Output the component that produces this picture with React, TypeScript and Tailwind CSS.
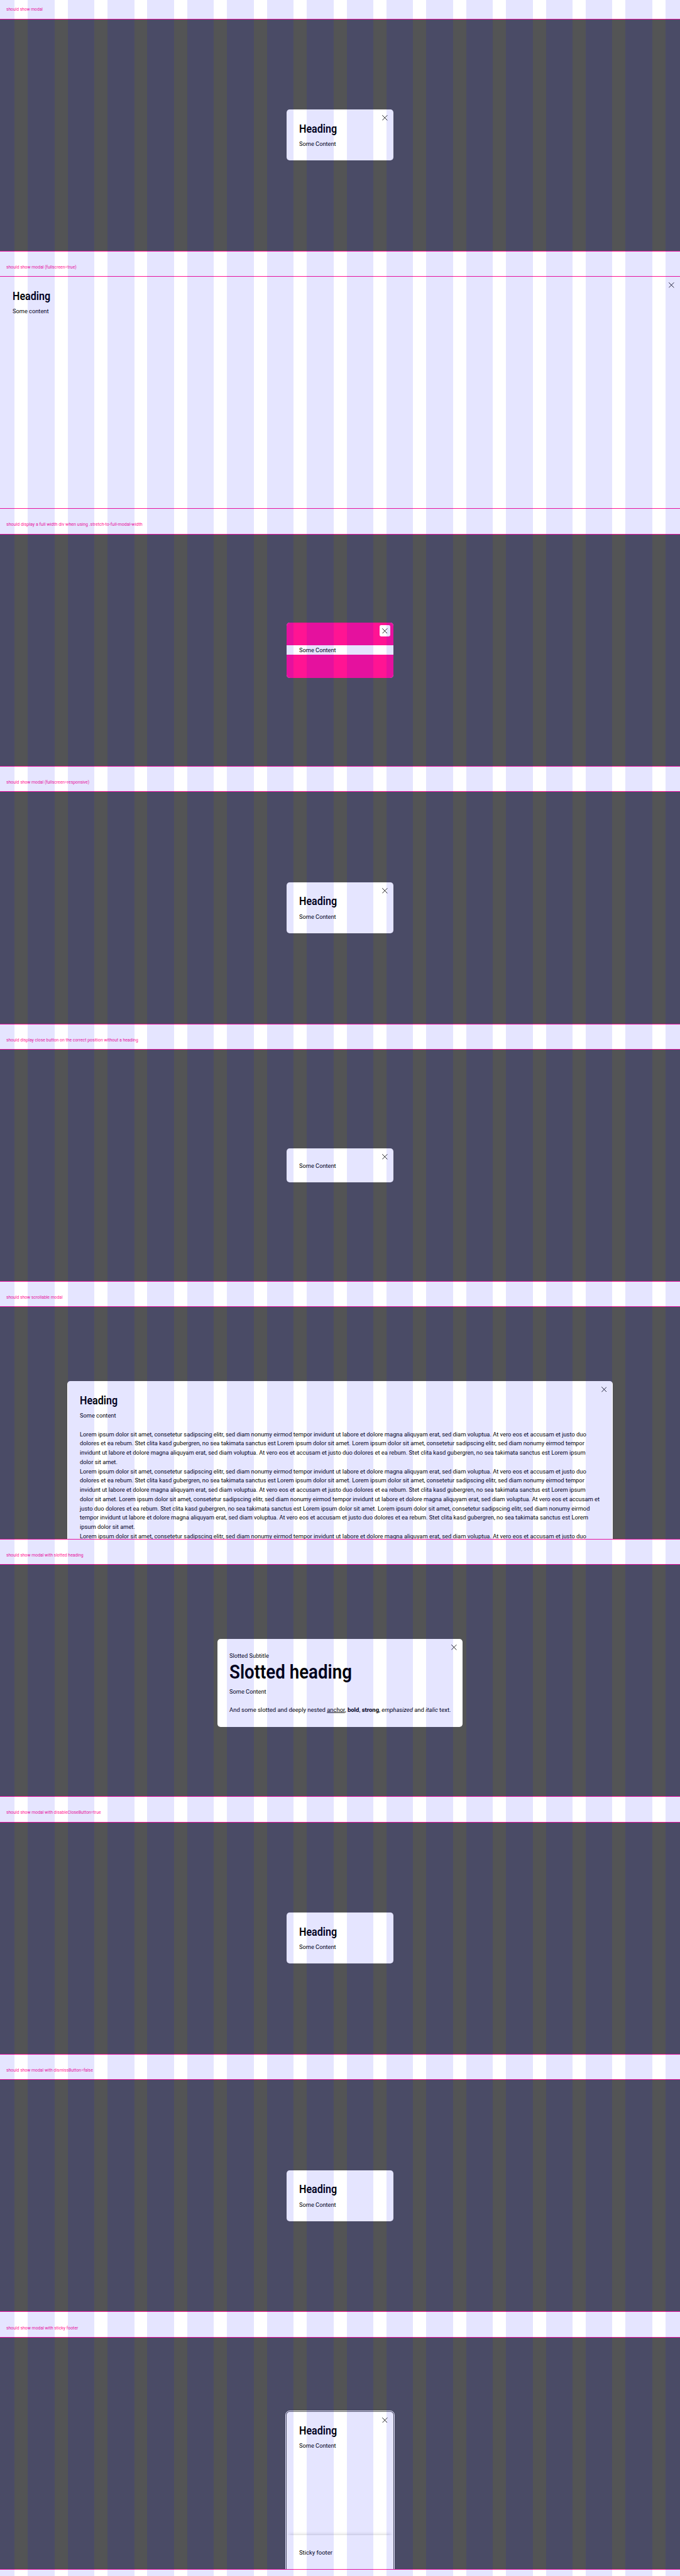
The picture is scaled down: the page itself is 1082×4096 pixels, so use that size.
import React from "react";
import type { ReactNode } from "react";

const LINES = [
  "Lorem ipsum dolor sit amet, consetetur sadipscing elitr, sed diam nonumy eirmod tempor invidunt ut labore et dolore magna aliquyam erat, sed diam voluptua. At vero eos et accusam et justo duo",
  "dolores et ea rebum. Stet clita kasd gubergren, no sea takimata sanctus est Lorem ipsum dolor sit amet. Lorem ipsum dolor sit amet, consetetur sadipscing elitr, sed diam nonumy eirmod tempor",
  "invidunt ut labore et dolore magna aliquyam erat, sed diam voluptua. At vero eos et accusam et justo duo dolores et ea rebum. Stet clita kasd gubergren, no sea takimata sanctus est Lorem ipsum",
  "dolor sit amet.",
  "Lorem ipsum dolor sit amet, consetetur sadipscing elitr, sed diam nonumy eirmod tempor invidunt ut labore et dolore magna aliquyam erat, sed diam voluptua. At vero eos et accusam et justo duo",
  "dolores et ea rebum. Stet clita kasd gubergren, no sea takimata sanctus est Lorem ipsum dolor sit amet. Lorem ipsum dolor sit amet, consetetur sadipscing elitr, sed diam nonumy eirmod tempor",
  "invidunt ut labore et dolore magna aliquyam erat, sed diam voluptua. At vero eos et accusam et justo duo dolores et ea rebum. Stet clita kasd gubergren, no sea takimata sanctus est Lorem ipsum",
  "dolor sit amet. Lorem ipsum dolor sit amet, consetetur sadipscing elitr, sed diam nonumy eirmod tempor invidunt ut labore et dolore magna aliquyam erat, sed diam voluptua. At vero eos et accusam et",
  "justo duo dolores et ea rebum. Stet clita kasd gubergren, no sea takimata sanctus est Lorem ipsum dolor sit amet. Lorem ipsum dolor sit amet, consetetur sadipscing elitr, sed diam nonumy eirmod",
  "tempor invidunt ut labore et dolore magna aliquyam erat, sed diam voluptua. At vero eos et accusam et justo duo dolores et ea rebum. Stet clita kasd gubergren, no sea takimata sanctus est Lorem",
  "ipsum dolor sit amet.",
  "Lorem ipsum dolor sit amet, consetetur sadipscing elitr, sed diam nonumy eirmod tempor invidunt ut labore et dolore magna aliquyam erat, sed diam voluptua. At vero eos et accusam et justo duo",
];

function CloseButton() {
  return (
    <button
      aria-label="Close"
      className="absolute top-[4.92px] right-[4.92px] flex size-[17.22px] items-center justify-center rounded-[2.46px] bg-white"
    >
      <svg viewBox="0 0 14 14" className="size-[8.61px]" fill="none" stroke="#010205" strokeWidth="1.4">
        <path d="M0.4 0.4 13.6 13.6M13.6 0.4 0.4 13.6" />
      </svg>
    </button>
  );
}

function Text({ children, scale = "scale-x-[0.9425]" }: { children: ReactNode; scale?: string }) {
  return (
    <p
      className={`h-[14.76px] w-max origin-left translate-y-[0.6px] text-[9.84px] leading-[14.76px] whitespace-nowrap ${scale}`}
    >
      {children}
    </p>
  );
}

function Heading() {
  return (
    <h2 className="mb-[4.92px] h-[22.3px] w-max origin-left scale-x-[0.89] text-[18.1px] leading-[22.3px] font-semibold whitespace-nowrap">
      Heading
    </h2>
  );
}

function Modal({ children, className, close = true }: { children: ReactNode; className: string; close?: boolean }) {
  return (
    <div className={`relative shrink-0 bg-white text-[#010205] ${className}`}>
      {children}
      {close && <CloseButton />}
    </div>
  );
}

function Section({
  title,
  scale,
  stage = "items-center",
  children,
}: {
  title: string;
  scale: string;
  stage?: string;
  children: ReactNode;
}) {
  return (
    <section className="flex h-[409.6px] flex-col">
      <div className="flex h-[29.52px] items-center pl-[9.84px]">
        <h1 className={`origin-left text-[7.38px] whitespace-nowrap text-[#ff1493] ${scale}`}>{title}</h1>
      </div>
      <div
        className={`flex h-[370.23px] justify-center overflow-hidden border-y border-[#ff1493] bg-[#535455] ${stage}`}
      >
        {children}
      </div>
    </section>
  );
}

const SMALL = "w-[169.74px] rounded-[4.92px] p-[19.68px]";

function BasicModal({ close = true }: { close?: boolean }) {
  return (
    <Modal className={SMALL} close={close}>
      <Heading />
      <Text>Some Content</Text>
    </Modal>
  );
}

function GridOverlay() {
  return (
    <div className="pointer-events-none absolute inset-0 flex gap-[20.9px]">
      <div className="w-[23.36px] shrink-0 bg-[#0000ff]/10" />
      {Array.from({ length: 16 }, (_, i) => (
        <div key={i} className="flex-1 bg-[#0000ff]/10" />
      ))}
      <div className="w-[23.36px] shrink-0 bg-[#0000ff]/10" />
    </div>
  );
}

export default function App() {
  return (
    <main className="relative h-[4096px] w-[1082px] overflow-hidden bg-white font-['Roboto',sans-serif]">
      <Section title="should show modal" scale="scale-x-[0.905]">
        <BasicModal />
      </Section>

      <Section title="should show modal (fullscreen=true)" scale="scale-x-[0.93]">
        <Modal className="h-full w-full p-[19.68px]">
          <Heading />
          <Text>Some content</Text>
        </Modal>
      </Section>

      <Section
        title="should display a full width div when using .stretch-to-full-modal-width"
        scale="scale-x-[0.961]"
      >
        <Modal className="w-[169.74px] overflow-hidden rounded-[4.92px]">
          <div className="h-[36.9px] bg-[#ff1493]" />
          <div className="pl-[19.68px]">
            <Text>Some Content</Text>
          </div>
          <div className="h-[36.9px] bg-[#ff1493]" />
        </Modal>
      </Section>

      <Section title="should show modal (fullscreen=responsive)" scale="scale-x-[0.925]">
        <BasicModal />
      </Section>

      <Section
        title="should display close button on the correct position without a heading"
        scale="scale-x-[0.931]"
      >
        <Modal className={SMALL}>
          <Text>Some Content</Text>
        </Modal>
      </Section>

      <Section title="should show scrollable modal" scale="scale-x-[0.918]" stage="items-start pt-[117.7px]">
        <Modal className="w-[867.2px] rounded-t-[4.92px] p-[19.68px]">
          <Heading />
          <Text>Some content</Text>
          <div className="pt-[14.76px]">
            {LINES.map((line, i) => (
              <Text key={i} scale="scale-x-[0.9505]">
                {line}
              </Text>
            ))}
          </div>
        </Modal>
      </Section>

      <Section title="should show modal with slotted heading" scale="scale-x-[0.928]" stage="items-start pt-[117.7px]">
        <Modal className="h-[140.2px] w-[390.5px] rounded-[4.92px] p-[19.68px]">
          <Text>Slotted Subtitle</Text>
          <h2 className="mb-[4.92px] h-[36.9px] w-max origin-left translate-y-[0.8px] scale-x-[0.893] text-[31px] leading-[36.9px] font-semibold whitespace-nowrap">
            Slotted heading
          </h2>
          <Text>Some Content</Text>
          <div className="pt-[14.76px]">
            <Text scale="scale-x-[0.962]">
              And some slotted and deeply nested <a className="underline">anchor</a>, <b className="font-bold">bold</b>,{" "}
              <strong className="font-bold">strong</strong>, <em>emphasized</em> and <i>italic</i> text.
            </Text>
          </div>
        </Modal>
      </Section>

      <Section title="should show modal with disableCloseButton=true" scale="scale-x-[0.928]">
        <BasicModal close={false} />
      </Section>

      <Section title="should show modal with dismissButton=false" scale="scale-x-[0.925]">
        <BasicModal close={false} />
      </Section>

      <Section title="should show modal with sticky footer" scale="scale-x-[0.936]" stage="items-start pt-[117.7px]">
        <Modal className="flex h-[400px] w-[169.74px] flex-col rounded-[4.92px] outline-1 outline-offset-1 outline-white">
          <div className="h-[196.6px] p-[19.68px]">
            <Heading />
            <Text>Some Content</Text>
          </div>
          <div className="h-[80px] bg-white p-[19.68px] shadow-[0_-5px_5px_-4px_rgba(1,2,5,0.18)]">
            <Text scale="scale-x-[0.96]">Sticky footer</Text>
          </div>
        </Modal>
      </Section>

      <GridOverlay />
    </main>
  );
}
